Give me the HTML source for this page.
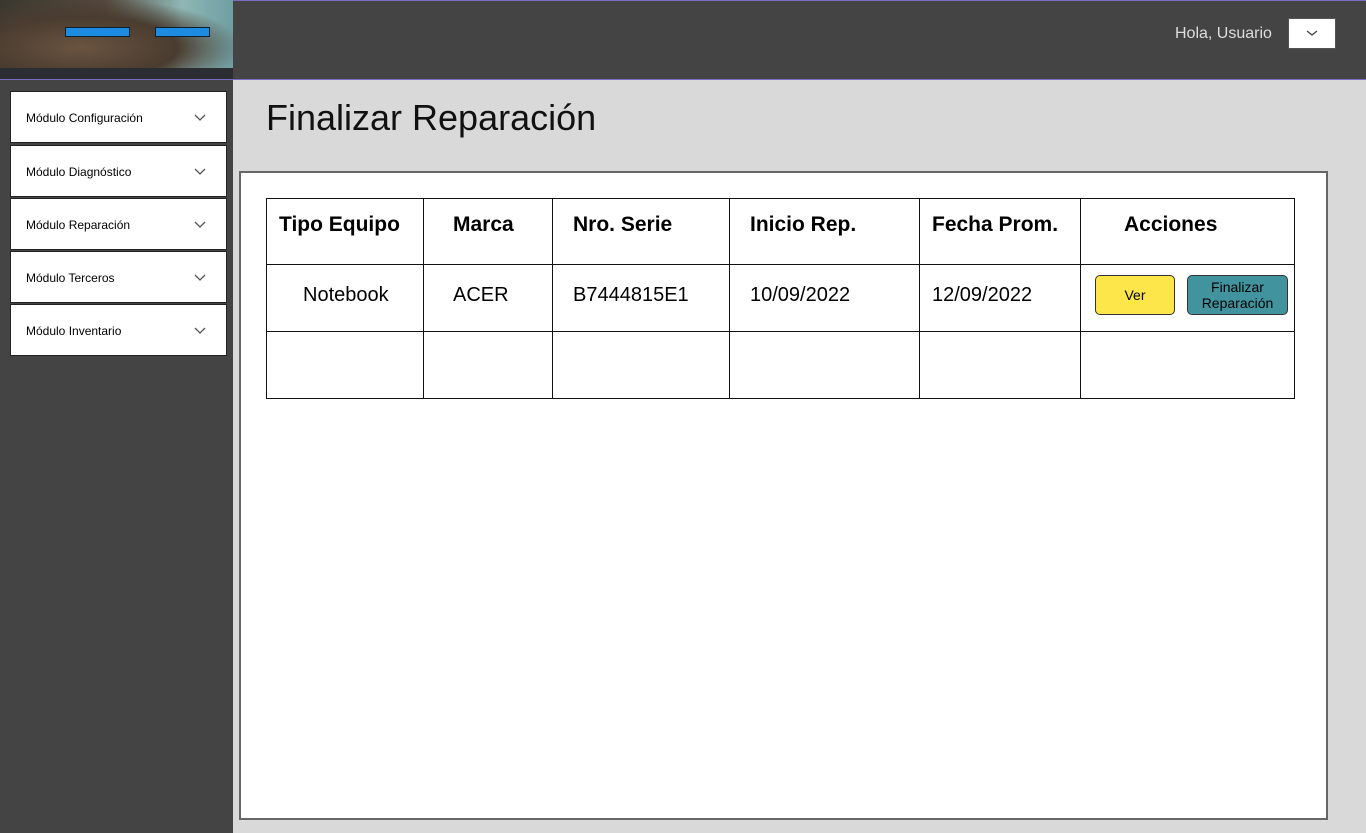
<!DOCTYPE html>
<html><head><meta charset="utf-8"><style>
*{box-sizing:border-box;margin:0;padding:0}
body{width:1366px;height:833px;overflow:hidden;background:#d9d9d9;font-family:"Liberation Sans",sans-serif;position:relative}
.hdr{position:absolute;left:0;top:0;width:1366px;height:80px;background:#444;border-top:1px solid #7a6cc0;border-bottom:1px solid #7a6cc0}
.logo{position:absolute;left:0;top:0;width:233px;height:79px;background:radial-gradient(ellipse at 35% 60%,#6a5440 0,#4a3c30 45%,transparent 75%),linear-gradient(90deg,#3a3830 0%,#564a3e 45%,#8fb7b5 78%,#6f9ea2 100%);overflow:hidden}
.glass{position:absolute;height:10px;background:#1d8be0;top:27px;border:1px solid #0a2030}
.side{position:absolute;left:0;top:80px;width:233px;height:753px;background:#444}
.item{position:absolute;left:10px;width:217px;height:52px;background:#fff;border:1px solid #222;font-size:12px;line-height:52px;padding-left:15px}
.item svg{position:absolute;right:20px;top:22px}
h1{position:absolute;left:266px;top:97px;font-size:36px;font-weight:normal;color:#111}
.box{position:absolute;left:239px;top:171px;width:1089px;height:649px;background:#fff;border:2px solid #666}
table{position:absolute;left:266px;top:198px;border-collapse:collapse}
td{border:1px solid #111;height:67px;font-size:20px;padding-left:12px;padding-bottom:6px}
th{border:1px solid #111;height:66px;font-size:21px;text-align:left;padding-left:12px;padding-bottom:14px}
.btn{position:absolute;border:1px solid #333;border-radius:5px;font-size:14px;text-align:center}
</style></head><body>
<div class="hdr">
<div style="position:absolute;left:1175px;top:24px;color:#ddd;font-size:16px">Hola, Usuario</div>
<div style="position:absolute;left:1288px;top:17px;width:48px;height:31px;background:#fff;border:1px solid #555"><svg width="48" height="31" style="position:absolute;left:0;top:0"><path d="M18 12l5 4 5-4" stroke="#444" fill="none" stroke-width="1.3"/></svg></div>
</div>
<div class="logo"><div class="glass" style="left:65px;width:65px"></div><div class="glass" style="left:155px;width:55px"></div><div style="position:absolute;left:0;top:68px;width:233px;height:11px;background:#2a2e33"></div></div>
<div class="side">
<div class="item" style="top:11px">Módulo Configuración<svg width="12" height="8"><path d="M1 1l5 5 5-5" stroke="#555" fill="none" stroke-width="1.3"/></svg></div>
<div class="item" style="top:65px">Módulo Diagnóstico<svg width="12" height="8"><path d="M1 1l5 5 5-5" stroke="#555" fill="none" stroke-width="1.3"/></svg></div>
<div class="item" style="top:118px">Módulo Reparación<svg width="12" height="8"><path d="M1 1l5 5 5-5" stroke="#555" fill="none" stroke-width="1.3"/></svg></div>
<div class="item" style="top:171px">Módulo Terceros<svg width="12" height="8"><path d="M1 1l5 5 5-5" stroke="#555" fill="none" stroke-width="1.3"/></svg></div>
<div class="item" style="top:224px">Módulo Inventario<svg width="12" height="8"><path d="M1 1l5 5 5-5" stroke="#555" fill="none" stroke-width="1.3"/></svg></div>
</div>
<h1>Finalizar Reparación</h1>
<div class="box"></div>
<table>
<tr><th style="width:157px">Tipo Equipo</th><th style="width:129px;padding-left:29px">Marca</th><th style="width:177px;padding-left:20px">Nro. Serie</th><th style="width:190px;padding-left:20px">Inicio Rep.</th><th style="width:161px">Fecha Prom.</th><th style="width:214px;padding-left:43px">Acciones</th></tr>
<tr><td style="padding-left:36px">Notebook</td><td style="padding-left:29px">ACER</td><td style="padding-left:20px">B7444815E1</td><td style="padding-left:20px">10/09/2022</td><td>12/09/2022</td><td></td></tr>
<tr><td></td><td></td><td></td><td></td><td></td><td></td></tr>
</table>
<div class="btn" style="left:1095px;top:275px;width:80px;height:40px;background:#fce64a;line-height:38px">Ver</div>
<div class="btn" style="left:1187px;top:275px;width:101px;height:40px;background:#41939e;line-height:16px;padding-top:3px">Finalizar Reparación</div>
</body></html>
